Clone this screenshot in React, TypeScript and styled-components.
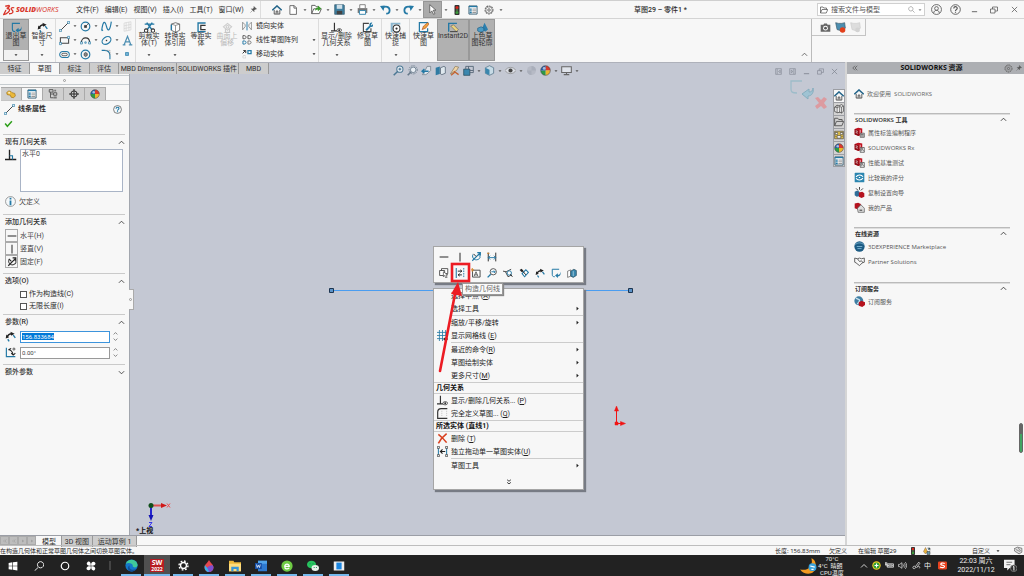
import React, { useEffect, useRef } from 'react';
import styled, { createGlobalStyle, css } from 'styled-components';

const GlobalStyle = createGlobalStyle`
  *, *::before, *::after { box-sizing: border-box; }
  body {
    margin: 0;
    background: #f7f7f7;
    color: #2c2c2c;
    font: 7px/8px Roboto, "Noto Sans CJK SC", sans-serif;
  }
  button, input {
    margin: 0;
    padding: 0;
    border: 0;
    border-radius: 0;
    background: none;
    color: inherit;
    font: inherit;
  }
  button { white-space: nowrap; }
  ul, h1, h2, h3, p { margin: 0; padding: 0; font-size: inherit; list-style: none; }
  a { color: inherit; text-decoration: none; }
`;

/* ---------- icons (16 unit grid) ---------- */

const B = '#2479a5';
const K = '#3a3a3a';
const G = '#777';

const toolCube = (
  <>
    <path d="M1 3l5-2 6 1v8l-5 3-6-2z" fill="#c1121f" />
    <path d="M1 3l6 2v8l-6-2z" fill="#8c0d16" />
    <path d="M2.500 5.500l3 1M2.500 8l3 1M9 4v6" stroke="#fff" strokeWidth="1" />
  </>
);

const glyphs: Record<string, React.ReactNode> = {
  home: (
    <>
      <path d="M3.500 8v6.500h9V8" fill="#fff" stroke={K} strokeWidth="1.300" />
      <path d="M6.500 14.500v-5h3v5" fill="#bbb" stroke={K} />
      <path d="M.5 8.500L8 1.500l7.500 7" fill="none" stroke="#24658a" strokeWidth="2.400" />
    </>
  ),
  page: <path d="M3 1h7l3.500 3.500V15H3zM9.500 1v4h4" fill="#fff" stroke="#555" strokeWidth="1.300" />,
  open: (
    <>
      <path d="M1 14V2h5l1.500 2H11v3M1 14L4 7h11l-3 7z" fill="#fff" stroke="#555" strokeWidth="1.300" />
      <path d="M6 10c0-4 2-5 4-5V2l5 4.500-5 4V8C8 8 7 9 6 10z" fill="#3c9a2c" />
    </>
  ),
  save: (
    <>
      <path d="M1 1h13l1 1v13H1z" fill="#3f7fa0" stroke="#33586b" />
      <path d="M4 1h8v6H4z" fill="#cfdfe8" />
      <path d="M4 10h8v5H4z" fill="#444" />
    </>
  ),
  print: (
    <>
      <path d="M4 6V1h8v5" fill="#fff" stroke="#555" />
      <path d="M1 6h14v7H1z" fill="#777" />
      <path d="M3.500 9.500h9V15h-9z" fill="#fff" stroke="#3685ad" strokeWidth="1.400" />
    </>
  ),
  undo: (
    <>
      <path d="M3 6c5-4 11-2 11 3 0 3-2 5-5 5" fill="none" stroke={B} strokeWidth="2.600" />
      <path d="M0 3l7-1-2 8z" fill={B} />
    </>
  ),
  redo: (
    <>
      <path d="M13 6C8 2 2 4 2 9c0 3 2 5 5 5" fill="none" stroke={B} strokeWidth="2.600" />
      <path d="M16 3L9 2l2 8z" fill={B} />
    </>
  ),
  cursor: <path d="M4 1v12l3-3 2.500 5 2-1-2.500-5H13z" fill="#fff" stroke="#444" />,
  light: (
    <>
      <rect x="4" y="0" width="8" height="16" rx="1.500" fill="#333" />
      <circle cx="8" cy="4" r="2.400" fill="#d9271c" />
      <circle cx="8" cy="8" r="1.300" fill="#6a5" />
      <circle cx="8" cy="12" r="2.400" fill="#3c9a3c" />
    </>
  ),
  list: (
    <>
      <path d="M1.500 1.500h13v13h-13z" fill="#fff" stroke="#3a5f74" strokeWidth="1.500" />
      <path d="M1.500 1.500h13v2h-13z" fill={B} />
      <path d="M7 6.500h6M7 9.300h6M7 12h6" stroke="#777" strokeWidth="1.200" />
      <path d="M2.500 6.500h3.500M2.500 9.300h3.500M2.500 12h3.500" stroke={B} strokeWidth="2" />
    </>
  ),
  gear: (
    <>
      <circle cx="8" cy="8" r="6.300" fill="none" stroke="#666" strokeWidth="1.700" strokeDasharray="3 1.100" />
      <circle cx="8" cy="8" r="5" fill="none" stroke="#777" />
      <circle cx="8" cy="8" r="2" fill="none" stroke="#555" strokeWidth="1.300" />
    </>
  ),
  pin: <path d="M9 1l6 6-3 .5-3 3 .5 2.500L3 6.500l3 .3L9 4zM6 10l-5 5" fill="currentColor" stroke="currentColor" />,
  folder: <path d="M1 14V2h5l1.500 2H13v3M1 14L4 7h11.500l-3 7z" fill="none" stroke="#555" strokeWidth="1.500" />,
  search: <path d="M10 10l5 5M6.500 1.500a5 5 0 1 0 .01 0z" fill="none" stroke="currentColor" strokeWidth="1.400" />,
  user: (
    <g fill="none" stroke="#555" strokeWidth="1.200">
      <circle cx="8" cy="8" r="7.200" />
      <circle cx="8" cy="6.500" r="2.700" />
      <path d="M4 13c0-5 8-5 8 0" />
    </g>
  ),
  help: (
    <g fill="none" stroke="currentColor" strokeWidth="1.300">
      <circle cx="8" cy="8" r="7" />
      <path d="M5.500 6.500c0-3.500 5-3.300 5-.3 0 2-2.500 2-2.500 3.800M8 11.300v1.400" strokeWidth="1.700" />
    </g>
  ),
  helpBlue: (
    <>
      <circle cx="8" cy="8" r="7" fill="#f4f8fa" stroke="#555" strokeWidth="1.300" />
      <path d="M5.500 6.500c0-3.500 5-3.300 5-.3 0 2-2.500 2-2.500 3.800M8 11.300v1.600" fill="none" stroke={B} strokeWidth="2" />
    </>
  ),
  min: <path d="M2 13h12" stroke="currentColor" strokeWidth="2" />,
  restore: <path d="M1 6h9v8H1zM5 6V2h10v8h-5" fill="none" stroke="currentColor" strokeWidth="1.500" />,
  close: <path d="M2 2l12 12M14 2L2 14" stroke="currentColor" strokeWidth="1.700" />,
  exit: (
    <>
      <path d="M13 2H2v8c0 3 1 4 4 4" fill="none" stroke={B} strokeWidth="1.600" />
      <path d="M15 6c0 4-2 5-4 5V8.500L6.500 12l4.500 4v-2.500c4 0 5-4 4-7.500z" fill={B} />
    </>
  ),
  dim: (
    <>
      <path d="M3 9c1-3 4-5 7-5" fill="none" stroke="#222" strokeWidth="2" />
      <path d="M1 11l1-6 4 4zM8 1l6 3-5 3z" fill="#222" />
      <path d="M4 12l2 3M12 6l3 4" stroke={B} strokeWidth="2" />
    </>
  ),
  line: (
    <>
      <path d="M2 14L14 2" stroke="#333" strokeWidth="1.300" />
      <path d="M.5 12.500h3v3h-3zM12.500.5h3v3h-3z" fill="#fff" stroke={B} />
    </>
  ),
  circle: (
    <>
      <circle cx="8" cy="8" r="6.300" fill="none" stroke={B} strokeWidth="1.700" />
      <path d="M6.500 6.500h3v3h-3zM8 8l5-5" fill={K} stroke={K} />
    </>
  ),
  polygon: (
    <>
      <circle cx="8" cy="8" r="6.300" fill="none" stroke={B} strokeWidth="1.700" />
      <path d="M6 6.500l2-1.500 2.500 1.500v3L8 11 6 9.500z" fill="#888" stroke={K} />
    </>
  ),
  spline: <path d="M1 14C3-2 6 0 8 8s5 7 7-7M1 14l2-1" fill="none" stroke={B} strokeWidth="1.700" />,
  rect: (
    <>
      <path d="M2 4h12v8H2z" fill="none" stroke="#444" strokeWidth="1.500" />
      <path d="M.5 11h3v3h-3zM12.500 2h3v3h-3z" fill="#fff" stroke={B} />
    </>
  ),
  arc: (
    <>
      <path d="M2 11C2 2 14 2 14 11" fill="none" stroke="#333" strokeWidth="1.600" />
      <path d="M.5 10h3v3h-3zM12.500 10h3v3h-3zM7 10h2v2H7z" fill="#fff" stroke={B} />
    </>
  ),
  ellipse: (
    <>
      <ellipse cx="8" cy="8" rx="7" ry="5" transform="rotate(-35 8 8)" fill="none" stroke={B} strokeWidth="1.700" />
      <path d="M7 7h2v2H7z" fill={K} />
    </>
  ),
  slot: (
    <>
      <rect x="1" y="3.500" width="14" height="9" rx="4.500" fill="none" stroke={B} strokeWidth="1.500" />
      <rect x="4" y="6.200" width="8" height="3.600" rx="1.800" fill="none" stroke="#555" strokeWidth="1.300" />
    </>
  ),
  fillet: (
    <>
      <path d="M1 2h4c5 0 8 3 8 8v5" fill="none" stroke={B} strokeWidth="1.600" />
      <path d="M6 2h7v7" fill="none" stroke="#888" strokeDasharray="2 1" />
    </>
  ),
  text: <path d="M1 14.500h4M10 14.500h5M3 14.500L8 2l5 12.500M5 10h6" fill="none" stroke="#4e8fb2" strokeWidth="1.800" />,
  point: <path d="M5 5h6v6H5z" fill="#6fb1d4" stroke={B} strokeWidth="1.300" />,
  surfaceGrid: <path d="M3 3l10-2v12L3 15zM3 7l10-2M3 11l10-2M6 2.500v12M10 1.500v12" fill="none" stroke="#d3d3d3" />,
  trim: (
    <>
      <path d="M1 3h14M4 1l8 11M12 1L4 12" stroke={B} strokeWidth="2" />
      <path d="M3 10a2.500 2.500 0 1 0 .1 0zM13 10a2.500 2.500 0 1 0 .1 0z" fill="#fff" stroke="#333" strokeWidth="1.500" />
    </>
  ),
  convert: (
    <>
      <path d="M2 3l6-2 6 2v9l-6 3-6-3z" fill="#fff" stroke="#666" strokeWidth="1.300" />
      <path d="M2 3l6 2 6-2M8 5v10" fill="none" stroke="#666" />
      <path d="M2 4v8" stroke={B} strokeWidth="2" />
    </>
  ),
  offset: (
    <>
      <path d="M14 1.500H3V14h11" fill="none" stroke={B} strokeWidth="2" />
      <path d="M14 5H7v6h7" fill="none" stroke="#333" strokeWidth="1.800" />
    </>
  ),
  surface: (
    <g fill="none" stroke="#ccc" strokeWidth="1.600">
      <path d="M2 7l6-5 6 5-6 5z" />
      <path d="M5 10v5h6v-5" />
      <circle cx="8" cy="7" r="2" />
    </g>
  ),
  mirror: (
    <>
      <path d="M1 2v12l4-5V6zM15 2v12l-4-5V6z" fill="#fff" stroke={G} strokeWidth="1.200" />
      <path d="M8 1v14" stroke={B} strokeWidth="1.500" />
    </>
  ),
  pattern: (
    <g fill="none" strokeWidth="1.500">
      <path d="M1.500 1h2c4 0 4 5 0 5h-2zM9.500 1h2c4 0 4 5 0 5h-2z" stroke="#555" />
      <path d="M1.500 9.500h2c4 0 4 5 0 5h-2z" stroke={B} />
      <path d="M9.500 9.500h2c4 0 4 5 0 5h-2z" stroke={G} />
    </g>
  ),
  move: (
    <>
      <path d="M1 7l4-4M2 2.500h4v4" fill="none" stroke="#333" strokeWidth="1.600" />
      <path d="M9.500 2.500h5v5h-5z" fill="#fff" stroke={B} strokeWidth="2" />
      <path d="M1.500 10.500h4v4h-4z" fill="none" stroke="#aaa" strokeDasharray="1 1" />
    </>
  ),
  relation: (
    <>
      <path d="M5 1v11M0 13h10" stroke="#333" strokeWidth="1.700" />
      <path d="M8 12c2-3 6-3 8 0-2 3-6 3-8 0z" fill="#fff" stroke="#333" strokeWidth="1.200" />
      <circle cx="12" cy="12" r="1.500" fill="#333" />
    </>
  ),
  repair: (
    <>
      <path d="M10 2H2v12h11V9" fill="none" stroke="#444" strokeWidth="1.600" />
      <path d="M5 11l6-6c-1-3 2-5 4-4l-2 3 1 1 2-2c1 3-1 5-3 4l-6 6z" fill={B} />
    </>
  ),
  snap: (
    <>
      <path d="M1 1h14v2.500H4V15H1z" fill="#8cb7cf" />
      <circle cx="9.500" cy="9.500" r="5" fill="#fff" stroke="#333" strokeWidth="1.500" />
      <circle cx="9.500" cy="9.500" r="1.600" fill="#333" />
    </>
  ),
  quick: (
    <>
      <path d="M15 1H2v13h12V9" fill="none" stroke={B} strokeWidth="1.800" />
      <path d="M6 11l2-5 6-5 2 2-5 6z" fill="#f0a33a" stroke="#b2542a" />
    </>
  ),
  instant: (
    <>
      <path d="M1 14V2h12" fill="none" stroke={B} strokeWidth="2" />
      <path d="M4 6l4-2 7 7-3 3z" fill="#ecd37b" stroke="#666" />
      <path d="M3 14h11" stroke="#444" strokeWidth="1.500" />
    </>
  ),
  shaded: (
    <>
      <path d="M7 10l4-9 5 10-4 3z" fill="#2c7fae" />
      <path d="M1 9l5-2 4 2v4l-5 2-4-2z" fill="#4d9cc4" stroke="#1e5f86" />
    </>
  ),
  camera: (
    <>
      <path d="M1 4h4l1-2h4l1 2h4v10H1z" fill="#666" />
      <circle cx="8" cy="9" r="3.500" fill="#fff" />
      <circle cx="8" cy="9" r="2" fill="#555" />
    </>
  ),
  record: (
    <>
      <path d="M1 1l4 1h5l4-1 1 8-3 1-2 3-7-2z" fill="#4b8eb0" stroke="#3a5a6c" />
      <circle cx="11" cy="11.500" r="4" fill="#e2401b" />
    </>
  ),
  recordOff: (
    <>
      <path d="M1 1l4 1h5l4-1 1 8-3 1-2 3-7-2z" fill="#ddd" stroke="#ccc" />
      <circle cx="11" cy="11.500" r="3.500" fill="#d3d3d3" />
    </>
  ),
  zoomFit: (
    <g fill="none" stroke="#4b7894" strokeWidth="1.500">
      <circle cx="10" cy="6" r="4.500" fill="#e8eef4" />
      <path d="M7 9l-6 6" strokeWidth="2.200" />
      <path d="M8 6h4M10 4v4" />
    </g>
  ),
  zoomArea: (
    <g fill="none" stroke="#667889" strokeWidth="1.200">
      <circle cx="9" cy="7" r="6" strokeDasharray="2 1.500" />
      <circle cx="9" cy="7" r="4" fill="#e8eef4" />
      <path d="M6 10l-5 5" strokeWidth="2.200" />
    </g>
  ),
  prev: (
    <>
      <path d="M9 2h5v6l-4 4-3 2H2l4-6z" fill="#dfe5ec" stroke="#68757f" />
      <path d="M2 9h9M5 6L1.500 9 5 12" fill="none" stroke={B} strokeWidth="2" />
    </>
  ),
  section: (
    <>
      <path d="M1 4l6-2v11l-6 2z" fill="#2f7ba3" />
      <path d="M8 4l5-2 2 1v9l-5 2-2-1z" fill="#dfe8ee" stroke="#456" />
    </>
  ),
  wand: (
    <>
      <path d="M2 13L9 2l5 1-3 5z" fill="#f0d5a8" stroke="#875" />
      <path d="M7 9l7 5M3 15l5-4" stroke="#c4622f" strokeWidth="1.800" />
    </>
  ),
  views: (
    <>
      <path d="M1 6h9v9H1z" fill="#3b87ae" stroke="#245" />
      <path d="M4 6V2h11v9h-5M8 2v4M10 8h5" fill="none" stroke="#567" strokeWidth="1.300" />
    </>
  ),
  cube: (
    <>
      <path d="M2 4l6-3 6 3v8l-6 3-6-3z" fill="#c7dbe6" stroke="#4a6c80" />
      <path d="M2 4l6 3v8l-6-3z" fill="#3b87ae" />
    </>
  ),
  eye: (
    <>
      <path d="M0 8c4-6 12-6 16 0-4 6-12 6-16 0z" fill="#dcdfe6" stroke="#888" />
      <circle cx="8" cy="8" r="3" fill="#444" />
    </>
  ),
  ball: (
    <>
      <circle cx="8" cy="8" r="6.500" fill="#b6bac5" />
      <path d="M8 1.500A6.500 6.500 0 0 1 14.500 8H8zM8 8v6.500A6.500 6.500 0 0 1 1.500 8z" fill="#aaafbb" />
    </>
  ),
  colorBall: (
    <>
      <path d="M8 8V1a7 7 0 0 1 7 7z" fill="#d83a2b" />
      <path d="M8 8h7a7 7 0 0 1-7 7z" fill="#ecb72e" />
      <path d="M8 8v7a7 7 0 0 1-7-7z" fill="#2d9a46" />
      <path d="M8 8H1a7 7 0 0 1 7-7z" fill="#2a5ea8" />
      <circle cx="8" cy="8" r="7" fill="none" stroke="#444" strokeWidth=".8" />
      <circle cx="6" cy="5" r="2" fill="#fff" opacity=".6" />
    </>
  ),
  monitor: <path d="M1 2.500h14v8.500H1zM8 11v3M4 14h8" fill="#dfe3ea" stroke="#666" strokeWidth="1.500" />,
  paneLeft: <path d="M1.500 1.500h13v13h-13zM5 2v12M12 5L8 8l4 3z" fill="none" stroke="currentColor" strokeWidth="1.400" />,
  paneRight: <path d="M1.500 1.500h13v13h-13zM11 2v12M5 5l4 3-4 3z" fill="none" stroke="currentColor" strokeWidth="1.400" />,
  part: (
    <>
      <path d="M1 6l3-3 4 1 2 2 4 1 1 4-3 3-4-1-1-3-5-1z" fill="#eab83a" stroke="#9a6d12" />
      <circle cx="5" cy="6" r="1.500" fill="#fff3c4" />
    </>
  ),
  config: (
    <>
      <path d="M2 1h6v4H2zM9 6h5v4H9zM4 5v9h5M4 8h5" fill="none" stroke="#555" strokeWidth="1.500" />
      <path d="M9 12h5v3H9zM10 1h3v3h-3z" fill="#777" />
    </>
  ),
  target: (
    <g fill="none" stroke="#222" strokeWidth="1.500">
      <circle cx="8" cy="8" r="5" />
      <path d="M8 0v16M0 8h16" />
    </g>
  ),
  check: <path d="M2 8l4 5 8-9" fill="none" stroke="#2fa01c" strokeWidth="2.600" />,
  perp: (
    <>
      <path d="M6 1v13M0 14h15" stroke="#222" strokeWidth="1.800" />
      <path d="M6 9h4v5" fill="none" stroke={B} strokeWidth="1.500" />
    </>
  ),
  info: (
    <>
      <circle cx="8" cy="8" r="7.200" fill="#f4f8fa" stroke="#777" />
      <path d="M8 2.500v2.500M8 6.500v7" stroke={B} strokeWidth="2.600" />
    </>
  ),
  horiz: <path d="M1 8h14" stroke="#333" strokeWidth="1.700" />,
  vert: <path d="M8 1v14" stroke="#333" strokeWidth="1.700" />,
  fix: (
    <>
      <path d="M2 14L13 3M9 1.500h5v5" fill="none" stroke="#222" strokeWidth="1.900" />
      <path d="M3 4c-2 6 3 10 8 8s4-6 1-7" fill="none" stroke="#444" strokeWidth="1.700" />
      <path d="M3 3l4 4" stroke="#222" strokeWidth="1.800" />
    </>
  ),
  fixBlue: (
    <>
      <path d="M2 14L14 2M10 1h5v5" fill="none" stroke={B} strokeWidth="1.800" />
      <path d="M3 4c-2 6 3 10 8 8s4-6 1-7" fill="none" stroke={B} strokeWidth="1.600" />
      <path d="M4 3l4 4" stroke="#333" strokeWidth="1.600" />
    </>
  ),
  span: (
    <>
      <path d="M2 1v14M14 1v14" stroke="#333" strokeWidth="1.600" />
      <path d="M2 9h12M5 6L2 9l3 3M11 6l3 3-3 3" fill="none" stroke={B} strokeWidth="1.500" />
      <path d="M0 2h4" stroke="#d8862a" strokeWidth="1.500" />
    </>
  ),
  angle: (
    <>
      <path d="M2 1v13h13" fill="none" stroke={B} strokeWidth="1.700" />
      <path d="M5 4c4 0 6 3 7 8M5 4l4-2M12 12l-3-3M12 12l3-3" fill="none" stroke="#222" strokeWidth="1.500" />
      <circle cx="13" cy="3" r="1.500" fill="none" stroke="#222" />
    </>
  ),
  selectBox: (
    <>
      <path d="M1 4h8v8H1zM4 4V1h10v8h-4" fill="#fff" stroke="#444" strokeWidth="1.400" />
      <path d="M7 6v8l2-2 2 4 2-1-2-4h3z" fill="#fff" stroke="#333" />
    </>
  ),
  construct: (
    <>
      <path d="M2 0v16" stroke={B} strokeWidth="1.700" />
      <path d="M14 0v16" stroke={B} strokeWidth="1.500" strokeDasharray="2.500 1.500" />
      <path d="M4.500 5H11M8.500 3L11 5 8.500 7M11 11H5M7.500 9L5 11l2.500 2" fill="none" stroke="#222" strokeWidth="1.500" />
    </>
  ),
  note: (
    <>
      <path d="M2.500 3.500h12v11h-12z" fill="#fff" stroke="#444" strokeWidth="1.500" />
      <path d="M5 13l3-7 3 7M6 11h4" fill="none" stroke="#444" strokeWidth="1.300" />
      <path d="M2 0v6M0 3h5" stroke="#d8862a" strokeWidth="1.600" />
    </>
  ),
  zoomTo: (
    <>
      <circle cx="10" cy="6" r="5" fill="#fff" stroke="#444" strokeWidth="1.400" />
      <path d="M7 6h6M11 4l2 2-2 2" fill="none" stroke={B} strokeWidth="1.500" />
      <path d="M6 10l-5 5" stroke={B} strokeWidth="2.200" />
    </>
  ),
  hideEntity: (
    <>
      <path d="M0 5l5 1 8-4M4 6l4 8 6-3" fill="none" stroke="#444" strokeWidth="1.500" />
      <circle cx="10" cy="8" r="3.500" fill="#fff" stroke={B} strokeWidth="1.500" />
      <path d="M12 10l3 4" stroke="#222" strokeWidth="1.500" />
    </>
  ),
  tagDim: (
    <>
      <path d="M1 3l3-2 3 3-2 3z" fill="#222" />
      <path d="M5 9l4 5 6-7-4-4z" fill="#fff" stroke={B} strokeWidth="1.700" />
      <path d="M6 5l5 6" stroke="#222" strokeWidth="1.500" />
    </>
  ),
  solid: (
    <>
      <path d="M1 5l5-2v10l-5 2z" fill="#fff" stroke="#444" />
      <path d="M6 5l5-3 4 2v8l-5 3-4-2z" fill="#3a87ad" stroke="#245" />
      <path d="M10 5v8" stroke="#cfe3ee" />
    </>
  ),
  grid: (
    <>
      <path d="M0 3.500h15M0 8h15M0 12.500h9M3.500 0v16M8 0v16M12.500 0v9" stroke={B} strokeWidth="1.200" />
      <path d="M9 13c2-3 5-3 7 0-2 3-5 3-7 0z" fill="#333" />
    </>
  ),
  define: (
    <>
      <path d="M15 1H6C3 1 1 3 1 6v9h14" fill="none" stroke="#333" strokeWidth="1.700" />
      <path d="M7 4v8M14 4v8" stroke="#aaa" strokeDasharray="1.500 1.500" />
    </>
  ),
  remove: <path d="M2 2c4 3 8 7 12 12M14 1C9 5 5 9 2 15" fill="none" stroke="#d9401f" strokeWidth="2.300" />,
  drag: (
    <>
      <path d="M2 1v14M14 1v14" stroke={B} strokeWidth="1.500" />
      <path d="M.5.5h3v3h-3zM.5 12.500h3v3h-3zM12.500.5h3v3h-3zM12.500 12.500h3v3h-3z" fill="#fff" stroke="#333" />
      <path d="M5 8h7M8 5L5 8l3 3" fill="none" stroke="#222" strokeWidth="1.700" />
    </>
  ),
  library: (
    <>
      <path d="M1 5l4-3 3 1 4-2 3 2v9l-3 2-3-1-3 1-5-2z" fill="#eee" stroke="#444" strokeWidth="1.200" />
      <path d="M5 2v12M9 4v10M12 5v10M1 5l4 1 4-2 3 1 3-2" fill="none" stroke="#444" />
    </>
  ),
  palette: (
    <>
      <path d="M1 2h14v12H1z" fill="#e8c64d" stroke="#444" />
      <path d="M2 4h4v3H2zM10 4h4v3h-4zM5 9h6v4H5zM2 10h2M12 10h2" fill="#fff" stroke="#333" />
    </>
  ),
  toolTag: (
    <>
      {toolCube}
      <path d="M9 9h6v6H9zM10 11h4M10 13h4" fill="#ddd" stroke="#444" />
    </>
  ),
  toolRx: (
    <>
      {toolCube}
      <path d="M9 8h6v7H9zM10.500 13.500v-4h2v2l2 2" fill="#eee" stroke="#444" />
    </>
  ),
  compare: (
    <>
      <rect x="1" y="1" width="14" height="14" rx="1" fill="#2c86b0" />
      <path d="M3 7c3-4 8-3 10 0M13 9c-3 4-8 3-10 0M7 8h2" fill="none" stroke="#fff" strokeWidth="1.600" />
    </>
  ),
  wizard: (
    <>
      <path d="M1 7l4-2 3 2v6l-4 1-3-2z" fill="#2e6e99" />
      <path d="M7 8l5-1 3 2v5l-4 2-4-2z" fill="#b5121e" />
      <path d="M3 2l3 3M8 0v4M13 2l-3 3" stroke="#333" strokeWidth="1.300" />
    </>
  ),
  products: (
    <>
      <path d="M1 2l5-1 4 2v7l-4 1-5-2z" fill="#b5121e" />
      <path d="M5 9l5-5 5 5v6H6z" fill="#ddd" stroke="#555" />
      <path d="M8 11h4v2H8z" fill="#666" />
    </>
  ),
  globe: (
    <>
      <circle cx="8" cy="8" r="7.500" fill="#1d5c84" />
      <path d="M2 5c4-3 8-3 12 0M4 8h8M5 11h6" fill="none" stroke="#7db6d4" strokeWidth="1.300" />
    </>
  ),
  shake: <path d="M1 3l4 1 3-1 3 1 4-1v6l-3 1-4 4-5-4-2-1zM5 4l3 4 3-1 2 3" fill="none" stroke="#555" strokeWidth="1.300" />,
  service: (
    <>
      <circle cx="7" cy="7" r="6.500" fill="#3f7ea3" />
      <path d="M3 3c2 2 4 1 5 3s-2 3-3 6" fill="none" stroke="#cfe3ee" strokeWidth="2" />
      <path d="M7 9l4-2 5 2v4l-4 3-5-2z" fill="#b5121e" />
    </>
  ),
  windows: <path d="M1 3l6-1v5.500H1zM8 2l7-1v6.500H8zM1 8.500h6V14l-6-1zM8 8.500h7V15l-7-1z" fill="#fff" />,
  finder: <path d="M7 10l-6 5.500M10.500 1a5 5 0 1 0 .01 0z" fill="none" stroke="#fff" strokeWidth="1.400" />,
  ring: <circle cx="8" cy="8" r="6" fill="none" stroke="#fff" strokeWidth="1.900" />,
  fan: (
    <path
      d="M7.500 7.500C2 9-1 4 3 1c4-1 5 3 4.500 6.500zM8.500 7.500C7 2 12-1 15 3c1 4-3 5-6.500 4.500zM8.500 8.500C14 7 17 12 13 15c-4 1-5-3-4.500-6.500zM7.500 8.500C9 14 4 17 1 13c-1-4 3-5 6.500-4.500z"
      fill="#fff"
    />
  ),
  edge: (
    <>
      <circle cx="8" cy="8" r="7.500" fill="#1477c9" />
      <path d="M1 6C3-1 14-1 15.500 7c0 4-5 4-6 2 1-4-6-5-8.500-3z" fill="#40c99a" />
      <path d="M6 8c-2 4 3 7 8 4-1 2-4 3.500-6 3.500C3 15 2 9 6 8z" fill="#0f4f9a" />
    </>
  ),
  settings: (
    <g fill="none" stroke="#fff">
      <circle cx="8" cy="8" r="4.300" strokeWidth="2" />
      <circle cx="8" cy="8" r="6.500" strokeWidth="2" strokeDasharray="2.500 2.600" />
    </g>
  ),
  drop: (
    <>
      <path d="M8 0c2 4 6 6 6 10a6 6 0 0 1-12 0C2 6 6 4 8 0z" fill="#e5484f" />
      <path d="M8 16a6 6 0 0 0 6-6c0-1-.3-2-1-3-4 0-8 2-9.500 6C4.500 15 6 16 8 16z" fill="#7b4fd0" />
      <path d="M2.500 7C1 12 4 16 8 16c-1-3-2-6-5.500-9z" fill="#37b3e8" />
    </>
  ),
  explorer: (
    <>
      <path d="M0 1h6l1 2h9v12H0z" fill="#f0b93a" />
      <path d="M0 5h16v10H0z" fill="#ffdc7c" />
      <path d="M3 15V9h10v6h-3v-3H6v3z" fill="#3a95d6" />
    </>
  ),
  word: (
    <>
      <path d="M4 1h12v14H4z" fill="#2e7ad1" />
      <path d="M4 1h12v4H4z" fill="#52a5ea" />
      <path d="M0 4h9v8H0z" fill="#164fa5" />
      <path d="M2 6l1 4 1.500-3L6 10l1-4" fill="none" stroke="#fff" />
    </>
  ),
  greenE: (
    <>
      <circle cx="8" cy="8" r="7.500" fill="#6fcb44" />
      <path d="M5 8.500h6c0-4-6-4-6 0s4 4 6 2" fill="none" stroke="#fff" strokeWidth="1.700" />
    </>
  ),
  wechat: (
    <>
      <ellipse cx="6" cy="6" rx="6" ry="5" fill="#27c35f" />
      <ellipse cx="11" cy="10.500" rx="5" ry="4" fill="#e8f2ea" />
      <path d="M4 5h.1M8 5h.1M9.500 10h.1M12.500 10h.1" stroke="#184" strokeWidth="1.400" strokeLinecap="round" />
    </>
  ),
  appWindow: (
    <>
      <path d="M1 2h14v12H1z" fill="#eee" />
      <path d="M4.500 3.500h7v9h-7z" fill="#1c86e0" />
    </>
  ),
  moon: (
    <>
      <path d="M11 1c2 7-3 12-10 10 4 6 14 5 14-3 0-3-1-6-4-7z" fill="#f39a1f" />
      <circle cx="12" cy="9" r="3.500" fill="#3ba3dc" />
      <path d="M10 8l4 1M11 11h2" stroke="#fff" />
    </>
  ),
  plus: (
    <>
      <circle cx="8" cy="8" r="7.500" fill="#e8c91f" />
      <circle cx="8" cy="8" r="5.500" fill="#2a9b37" />
      <path d="M8 4.500v7M4.500 8h7" stroke="#fff" strokeWidth="2" />
    </>
  ),
  battery: <path d="M4 5h11v6H4zM6 7h7v2H6zM1 2v5M3 2v5M0 7h4v3" fill="none" stroke="#eee" strokeWidth="1.400" />,
  sound: <path d="M1 6h2l4-3v10l-4-3H1zM9 6c1 1 1 3 0 4M11 4c2 2 2 6 0 8M13 2c3 3 3 9 0 12" fill="none" stroke="#eee" strokeWidth="1.200" />,
  pen: <path d="M2 13c-2-3 2-5 4-3s-2 5-4 3zM6 10l6-8 2 2-6 8M10 11c3-3 5 0 3 2" fill="none" stroke="#ddd" strokeWidth="1.400" />,
  sogou: (
    <>
      <rect x="0" y="1" width="16" height="14" rx="2" fill="#e8431f" />
      <path d="M12 4.500c-3-1.500-8-1-7 1.500 1 2 6 1 6.500 3.500.5 2.500-4.500 3-8 1" fill="none" stroke="#fff" strokeWidth="2" />
    </>
  ),
  notice: (
    <>
      <path d="M0 1h13v10H7l-3 3v-3H0z" fill="#f2f2f2" />
      <path d="M3 4h7M3 7h5" stroke="#555" />
      <circle cx="12" cy="11.500" r="4" fill="#2b2b2b" stroke="#888" />
      <path d="M11 10l1.200-.8v5" fill="none" stroke="#fff" strokeWidth="1.200" />
    </>
  ),
  rebuild: (
    <>
      <path d="M1 9l4-8 4 8-4 5z" fill="#e5b33a" stroke="#865" />
      <path d="M9 2h5v5M14 2l-4 4M8 9h6v6H8z" fill="#69a" stroke="#333" />
    </>
  ),
  tags: (
    <>
      <path d="M0 5l6-3 8 2v7l-5 3-8-5z" fill="#ddd" stroke="#555" strokeWidth="1.200" />
      <path d="M3 6l8 4M7 3l5 6" stroke="#555" />
    </>
  ),
  chevUp: <path d="M2 11l6-6 6 6" fill="none" stroke="currentColor" strokeWidth="1.900" />,
  chevDown: <path d="M2 5l6 6 6-6" fill="none" stroke="currentColor" strokeWidth="1.900" />,
  collapse: <path d="M8 2L2 8l6 6M14 2L8 8l6 6" fill="none" stroke="currentColor" strokeWidth="2" />,
  expand: <path d="M3 2l5 4 5-4M3 9l5 4 5-4" fill="none" stroke="currentColor" strokeWidth="2.400" />,
  caret: <path d="M2 5h12l-6 7z" fill="currentColor" />,
  play: <path d="M5 2v12l7-6z" fill="currentColor" />,
};

const Svg = styled.svg`
  display: block;
  flex: none;
`;

const Icon = ({ name, size = 11 }: { name: string; size?: number }) => (
  <Svg width={size} height={size} viewBox="0 0 16 16" fill="none" aria-hidden="true">
    {glyphs[name]}
  </Svg>
);

/* ---------- shell ---------- */

const Shell = styled.div`
  display: flex;
  flex-direction: column;
  min-height: 100vh;
`;

const IconButton = styled.button<{ $w?: number; $active?: boolean }>`
  display: flex;
  flex: none;
  align-items: center;
  justify-content: center;
  width: ${(p) => p.$w ?? 12}px;
  color: #555;
  ${(p) => p.$active && css`
    align-self: stretch;
    background: #ababab;
    border: 1px solid #969696;
  `}
`;

/* ---------- title bar ---------- */

const TitleBar = styled.header`
  display: flex;
  align-items: center;
  height: 19px;
  border-top: 1px solid #cfcfcf;
  border-bottom: 1px solid #d4d4d4;
`;

const Brand = styled.div`
  display: flex;
  align-items: center;
  gap: 1px;
  width: 76px;
  padding-left: 3px;
  color: #d9362b;
  font: italic 7px/8px "Open Sans", sans-serif;
  b { font-weight: 800; }
`;

const MenuBar = styled.nav`
  display: flex;
  gap: 6px;
  width: 171px;
`;

const QuickTools = styled.div`
  display: flex;
  align-items: center;
  align-self: stretch;
  margin-left: 1px;
  padding-left: 8px;
  border-left: 1px solid #ddd;
`;

const DocTitle = styled.h1`
  flex: 1;
  text-align: center;
  font-weight: 500;
`;

const SearchBox = styled.label`
  display: flex;
  align-items: center;
  gap: 3px;
  width: 108px;
  height: 13px;
  padding: 0 2px;
  border: 1px solid #d0d0d0;
  background: #fff;
  color: #888;
  input { flex: 1; min-width: 0; outline: 0; }
  input::placeholder { color: #555; opacity: 1; }
`;

const WindowButtons = styled.div`
  display: flex;
  padding-left: 1px;
  color: #444;
`;

/* ---------- ribbon ---------- */

const RibbonRow = styled.div`
  display: flex;
  height: 43px;
`;

const Ribbon = styled.div`
  display: flex;
  flex: 1;
  padding-left: 3px;
  border-right: 1px solid #bbb;
`;

const RibbonGroup = styled.div`
  display: flex;
  border-right: 1px solid #dcdcdc;
`;

const BigButton = styled.button<{ $w?: number; $pressed?: boolean; $disabled?: boolean; $half?: boolean }>`
  display: grid;
  grid-template-rows: 11px 20px 8px;
  justify-items: center;
  align-items: start;
  width: ${(p) => p.$w ?? 26}px;
  height: 42px;
  padding-top: 3px;
  color: ${(p) => (p.$disabled ? '#bbb' : '#333')};
  line-height: 7px;
  text-align: center;
  white-space: pre;
  ${(p) => p.$pressed && css`
    background: #b1b1b1;
    box-shadow: inset 0 0 0 1px #999;
  `}
  ${(p) => p.$half && css`background: linear-gradient(#b1b1b1 31px, #f1f1f1 31px);`}
`;

const ToolGrid = styled.div`
  display: grid;
  grid-template-columns: 14px 7px 14px 7px 14px 7px 14px;
  grid-template-rows: repeat(3, 14px);
  align-items: center;
  justify-items: center;
  padding: 0 1px;
`;

const ToolButton = styled.button`
  color: #555;
`;

const ToolList = styled.div`
  display: flex;
  flex-direction: column;
  width: 78px;
  padding-left: 2px;
`;

const ToolRow = styled.button`
  display: grid;
  grid-template-columns: 14px 1fr 6px;
  align-items: center;
  height: 14px;
  text-align: left;
`;

const RibbonEnd = styled.div`
  display: flex;
  flex: 1;
  align-items: flex-end;
  justify-content: flex-end;
  padding: 0 1px 4px;
`;

const SideTools = styled.div`
  width: 212px;
`;

const CaptureBar = styled.div`
  display: flex;
  align-items: center;
  gap: 3px;
  width: 54px;
  height: 17px;
  padding-left: 7px;
  border: solid #c4c4c4;
  border-width: 0 1px 1px 0;
`;

/* ---------- middle ---------- */

const Middle = styled.div`
  display: flex;
  flex: 1;
`;

const Work = styled.main`
  display: flex;
  flex: 1;
  flex-direction: column;
  min-width: 0;
  background: #c4c8d3;
`;

const Band = styled.div`
  display: grid;
  grid-template-columns: 130px minmax(0, 1fr) auto minmax(0, 1fr);
  height: 12px;
  border-top: 1px solid #aeb1ba;
`;

const Tabs = styled.div`
  display: flex;
  grid-column: 1 / 3;
  grid-row: 1;
`;

const Tab = styled.button<{ $w: number; $active?: boolean }>`
  width: ${(p) => p.$w}px;
  height: 11px;
  border-right: 1px solid #999;
  background: ${(p) => (p.$active ? '#f7f7f7' : '#cdcdcd')};
`;

const ViewTools = styled.div`
  display: flex;
  grid-column: 3;
  grid-row: 1;
  align-items: center;
  padding: 2px 4px 0 0;
`;

const DocButtons = styled.div`
  display: flex;
  grid-column: 4;
  grid-row: 1;
  align-items: center;
  justify-content: flex-end;
  padding: 3px 4px 0 0;
  button { color: #808591; }
`;

const WorkRow = styled.div`
  display: flex;
  flex: 1;
`;

/* ---------- property panel ---------- */

const Panel = styled.aside`
  width: 130px;
  padding-top: 1px;
  border-right: 1px solid #a2a6ae;
  background: #f7f7f7;
`;

const PanelGrip = styled.div`
  display: flex;
  align-items: center;
  justify-content: center;
  height: 10px;
  margin-bottom: 2px;
  border: solid #c6ccd0;
  border-width: 1px 0;
  &::before {
    content: "";
    width: 3px;
    height: 3px;
    border: 1px solid #999;
    border-radius: 2px;
  }
`;

const PanelTabs = styled.div`
  display: flex;
  height: 14px;
  margin-left: 1px;
  border-bottom: 1px solid #c4c4c4;
`;

const PanelTab = styled.button<{ $active?: boolean }>`
  display: flex;
  align-items: center;
  justify-content: center;
  width: 21px;
  border: solid #aaa;
  border-width: 1px 1px 0 0;
  background: ${(p) => (p.$active ? '#f7f7f7' : '#cfcfcf')};
`;

const PanelTitle = styled.div`
  display: flex;
  align-items: center;
  gap: 3px;
  height: 16px;
  padding: 0 7px 0 4px;
  h2 { flex: 1; }
`;

const Confirm = styled.div`
  height: 17px;
  padding: 2px 0 0 3px;
`;

const Section = styled.section<{ $h: number }>`
  height: ${(p) => p.$h}px;
  margin: 0 4px 0 3px;
  padding-left: 2px;
  border-top: 1px solid #cacaca;
`;

const SectionHead = styled.button`
  display: flex;
  align-items: center;
  justify-content: space-between;
  width: 100%;
  height: 14px;
  color: #333;
  font-weight: 500;
`;

const Field = styled.div<{ $h?: number; $top?: boolean }>`
  display: flex;
  align-items: ${(p) => (p.$top ? 'flex-start' : 'center')};
  gap: 3px;
  height: ${(p) => p.$h ?? 13}px;
  color: #444;
`;

const RelationList = styled.ul`
  width: 103px;
  height: 43px;
  padding-left: 1px;
  border: 1px solid #a9b4c6;
  background: #fff;
`;

const SquareButton = styled.button`
  display: flex;
  align-items: center;
  justify-content: center;
  width: 13px;
  height: 13px;
  margin-right: -1px;
  border: 1px solid #aaa;
`;

const CheckLabel = styled.label`
  display: flex;
  align-items: center;
  gap: 2px;
  height: 12px;
  padding-left: 15px;
`;

const CheckBox = styled.input`
  appearance: none;
  width: 7px;
  height: 7px;
  border: 1px solid #555;
  background: #fff;
`;

const NumberBox = styled.input<{ $focus?: boolean }>`
  width: 90px;
  height: 12px;
  margin-left: 1px;
  padding-left: 1px;
  border: 1px solid ${(p) => (p.$focus ? '#3d94dc' : '#999')};
  outline: 0;
  background: #fff;
  font-size: 6px;
  caret-color: transparent;
  &::selection { background: #0078d7; color: #fff; }
`;

const Spinner = styled.div`
  display: flex;
  flex-direction: column;
  gap: 1px;
  button { display: block; }
`;

/* ---------- drawing canvas ---------- */

const Canvas = styled.div`
  position: relative;
  flex: 1;
  min-width: 0;
`;

const Drawing = styled.svg`
  position: absolute;
  inset: 0;
  width: 100%;
  height: 100%;
`;

const ViewName = styled.p`
  position: absolute;
  left: 6px;
  bottom: 0;
  color: #111;
  font-weight: 700;
`;

const CornerTools = styled.div`
  position: absolute;
  top: 5px;
  right: 18px;
`;

const Rail = styled.nav`
  position: absolute;
  top: 15px;
  right: 0;
`;

const RailTab = styled.button<{ $active?: boolean }>`
  display: flex;
  align-items: center;
  justify-content: center;
  width: 12px;
  height: 13px;
  border: 1px solid #9c9ea3;
  border-bottom-width: 0;
  background: ${(p) => (p.$active ? '#f7f7f7' : '#d2d2d2')};
  &:last-child { border-bottom-width: 1px; }
`;

const PanelHandle = styled.button`
  position: absolute;
  top: 215px;
  left: -1px;
  width: 5px;
  height: 21px;
  border: 1px solid #aaa;
  border-left: 0;
  background: #f7f7f7;
  &::before {
    content: "";
    display: block;
    width: 3px;
    height: 3px;
    border: 1px solid #999;
    border-radius: 2px;
  }
`;

const popup = css`
  position: absolute;
  left: 303px;
  width: 151px;
  border: 1px solid #a5a5a5;
  background: #f7f7f7;
  box-shadow: 2px 2px 1px #777b84;
`;

const MiniBar = styled.div`
  ${popup}
  top: 172px;
  height: 37px;
  padding: 2px;
`;

const MiniRow = styled.div`
  display: flex;
  height: 16px;
`;

const ContextMenu = styled.ul`
  ${popup}
  top: 214px;
`;

const MenuItem = styled.li<{ $rule?: boolean }>`
  margin-left: 17px;
  ${(p) => p.$rule && css`border-top: 1px solid #ccc;`}
`;

const MenuButton = styled.button`
  display: grid;
  grid-template-columns: 14px 1fr 8px;
  align-items: center;
  width: 149px;
  height: 13px;
  margin-left: -17px;
  padding-left: 3px;
  color: #222;
  text-align: left;
  span { grid-column: 2; }
  svg:first-child { grid-column: 1; }
  svg:last-child:not(:first-child) { grid-column: 3; }
`;

const MenuHead = styled.li`
  height: 12px;
  padding-left: 2px;
  border: solid #ccc;
  border-width: 1px 0;
  color: #111;
  font-weight: 700;
  line-height: 10px;
`;

const MenuMore = styled.li`
  display: flex;
  justify-content: center;
  padding: 7px 0 4px;
`;

const Tooltip = styled.div`
  position: absolute;
  top: 209px;
  left: 332px;
  padding: 1px 2px;
  border: 1px solid #999;
  background: #fafafa;
  color: #666;
  box-shadow: 1px 1px 1px #888;
`;

/* ---------- bottom tabs ---------- */

const SheetBar = styled.div`
  display: flex;
  height: 10px;
  border-top: 1px solid #9b9ea6;
  background: #f7f7f7;
`;

const SheetNav = styled.div`
  display: flex;
  width: 37px;
  color: #999;
  button {
    display: flex;
    align-items: center;
    justify-content: center;
    width: 9px;
    border: 1px solid #aaa;
    background: #bdbdbd;
  }
`;

/* ---------- task pane ---------- */

const TaskPane = styled.aside`
  width: 179px;
  border-left: 2px solid #d5d5d5;
  background: #f7f7f7;
`;

const PaneHead = styled.div`
  display: flex;
  align-items: center;
  height: 12px;
  padding: 0 1px 0 2px;
  background: #adafb3;
  h2 { flex: 1; color: #111; font-family: "Open Sans", "Noto Sans CJK SC", sans-serif; text-align: center; }
`;

const paneFont = css`
  font: 6px/8px "Open Sans", "Noto Sans CJK SC", sans-serif;
`;

const Welcome = styled.a`
  display: flex;
  align-items: center;
  gap: 3px;
  height: 39px;
  padding-left: 7px;
  color: #666;
  ${paneFont}
`;

const PaneSection = styled.section<{ $gap?: number }>`
  margin: 0 14px ${(p) => p.$gap ?? 0}px 7px;
  border-top: 1px solid #bbb;
  box-shadow: inset 0 1px #ddd;
`;

const PaneToggle = styled.button`
  display: flex;
  align-items: center;
  justify-content: space-between;
  width: 100%;
  height: 11px;
  padding: 0 3px 0 1px;
  ${paneFont}
  font-weight: 600;
`;

const PaneLink = styled.a`
  display: flex;
  align-items: center;
  gap: 3px;
  height: 15px;
  color: #555;
  ${paneFont}
`;

/* ---------- status bar and taskbar ---------- */

const StatusBar = styled.footer`
  display: flex;
  align-items: center;
  gap: 6px;
  height: 10px;
  padding-right: 1px;
  border-top: 1px solid #bdbdbd;
  font: 6px/8px "Noto Sans", "Noto Sans CJK SC", sans-serif;
  p { flex: 1; }
`;

const StatusText = styled.span<{ $w: number; $end?: boolean }>`
  width: ${(p) => p.$w}px;
  white-space: nowrap;
  ${(p) => p.$end && css`text-align: right;`}
`;

const StatusIcons = styled.span`
  display: flex;
  align-items: center;
  gap: 14px;
`;

const Taskbar = styled.nav`
  display: flex;
  height: 21px;
  background: #222;
  color: #f0f0f0;
`;

const TaskApp = styled.button<{ $open?: boolean; $active?: boolean }>`
  display: flex;
  align-items: center;
  justify-content: center;
  width: 26px;
  background: ${(p) => (p.$active ? '#505050' : 'none')};
  box-shadow: ${(p) => (p.$open || p.$active ? 'inset 0 -2px #76b9ed' : 'none')};
  ${(p) => p.$open && css`
    width: 20px;
    margin: 0 3px;
  `}
`;

const TaskDivider = styled.span`
  width: 2px;
  height: 9px;
  margin: 6px 7px 6px 5px;
  background: #444;
`;

const SwBadge = styled.span`
  display: flex;
  flex-direction: column;
  align-items: center;
  width: 14px;
  height: 13px;
  background: #b81c22;
  color: #fff;
  font: 700 7px/8px "Noto Sans", sans-serif;
  small { font-size: 5px; line-height: 5px; }
`;

const Tray = styled.div`
  display: flex;
  align-items: center;
  margin-left: auto;
  color: #eee;
`;

const Weather = styled.div`
  display: flex;
  align-items: center;
  width: 59px;
`;

const Readings = styled.div`
  display: flex;
  flex-direction: column;
  align-items: center;
  margin-left: -3px;
  font-size: 6px;
  line-height: 7px;
`;

const Clock = styled.time`
  width: 42px;
  margin-left: 2px;
  line-height: 9px;
  text-align: center;
`;

const FloatingMeter = styled.div`
  position: fixed;
  top: 423px;
  right: 1px;
  width: 4px;
  height: 30px;
  border: 1px solid #666;
  border-radius: 2px;
  background: linear-gradient(#666 10px, #41a562 10px);
`;

/* ---------- data ---------- */

const menus = ['文件(F)', '编辑(E)', '视图(V)', '插入(I)', '工具(T)', '窗口(W)'];

type Big = { icon: string; label: string; w?: number; caret?: boolean; pressed?: boolean; disabled?: boolean; half?: boolean };

const BigTool = ({ icon, label, w, caret, pressed, disabled, half }: Big) => (
  <BigButton $w={w} $pressed={pressed} $disabled={disabled} $half={half}>
    <Icon name={icon} size={11} />
    <span>{label}</span>
    {caret && <Icon name="caret" size={4} />}
  </BigButton>
);

const sketchTools: [string, boolean][] = [
  ['line', true], ['circle', true], ['spline', true], ['surfaceGrid', false],
  ['rect', true], ['arc', true], ['ellipse', true], ['text', false],
  ['slot', true], ['polygon', false], ['fillet', true], ['point', false],
];

const ribbonTabs: [string, number][] = [
  ['特征', 30], ['草图', 30], ['标注', 30], ['评估', 29], ['MBD Dimensions', 58], ['SOLIDWORKS 插件', 62], ['MBD', 30],
];

const viewTools: [string, boolean][] = [
  ['zoomFit', false], ['zoomArea', false], ['prev', false], ['section', false], ['wand', false], ['views', true],
  ['cube', true], ['eye', true], ['ball', false], ['colorBall', true], ['monitor', true],
];

type Entry = { label: string; icon?: string; key?: string; more?: boolean; rule?: boolean; head?: boolean };

const entries: Entry[] = [
  { label: '选择中点 ', key: 'A' },
  { label: '选择工具', more: true },
  { label: '缩放/平移/旋转', more: true, rule: true },
  { label: '显示网格线 ', key: 'E', icon: 'grid' },
  { label: '最近的命令', key: 'R', more: true, rule: true },
  { label: '草图绘制实体', more: true },
  { label: '更多尺寸', key: 'M', more: true },
  { label: '几何关系', head: true },
  { label: '显示/删除几何关系... ', key: 'P', icon: 'relation' },
  { label: '完全定义草图... ', key: 'Q', icon: 'define' },
  { label: '所选实体 (直线1)', head: true },
  { label: '删除 ', key: 'T', icon: 'remove' },
  { label: '独立拖动单一草图实体', key: 'U', icon: 'drag' },
  { label: '草图工具', more: true, rule: true },
];

const paneTools: [string, string][] = [
  ['toolTag', '属性标签编制程序'],
  ['toolRx', 'SOLIDWORKS Rx'],
  ['toolRx', '性能基准测试'],
  ['compare', '比较我的评分'],
  ['wizard', '复制设置向导'],
  ['products', '我的产品'],
];

/* ---------- parts ---------- */

const Top = () => (
  <>
    <TitleBar>
      <Brand>
        <Svg width="12" height="12" viewBox="0 0 16 16" fill="none" stroke="#d9362b" strokeWidth="1.700" aria-hidden="true">
          <path d="M3 3l5-1c2 1-1 3-3 4 4 0 5 2 2 5s-6 3-6 3l3-6M15 5c-4-1-5 1-3 3s2 5-4 5" />
        </Svg>
        <span><b>SOLID</b>WORKS</span>
      </Brand>
      <MenuBar>
        {menus.map((m) => <button key={m}>{m}</button>)}
      </MenuBar>
      <IconButton $w={12} aria-label="固定菜单"><Icon name="pin" size={7} /></IconButton>
      <QuickTools>
        <IconButton $w={16} aria-label="主页"><Icon name="home" size={10} /></IconButton>
        <IconButton $w={16} aria-label="新建"><Icon name="page" size={10} /></IconButton>
        <IconButton $w={7} aria-label="新建选项"><Icon name="caret" size={4} /></IconButton>
        {['open', 'save', 'print', 'undo', 'redo'].map((n) => (
          <React.Fragment key={n}>
            <IconButton $w={17} aria-label={n}><Icon name={n} size={11} /></IconButton>
            <IconButton $w={6} aria-label={`${n} 选项`}><Icon name="caret" size={4} /></IconButton>
          </React.Fragment>
        ))}
        <IconButton $w={19} $active aria-label="选择"><Icon name="cursor" size={11} /></IconButton>
        <IconButton $w={7} aria-label="选择选项"><Icon name="caret" size={4} /></IconButton>
        <IconButton $w={16} aria-label="重建"><Icon name="light" size={10} /></IconButton>
        <IconButton $w={16} aria-label="文件属性"><Icon name="list" size={10} /></IconButton>
        <IconButton $w={16} aria-label="选项"><Icon name="gear" size={10} /></IconButton>
        <IconButton $w={7} aria-label="更多选项"><Icon name="caret" size={4} /></IconButton>
      </QuickTools>
      <DocTitle>草图29 – 零件1 *</DocTitle>
      <SearchBox>
        <Icon name="folder" size={8} />
        <input type="text" placeholder="搜索文件与模型" aria-label="搜索文件与模型" />
        <Icon name="search" size={7} />
        <Icon name="caret" size={4} />
      </SearchBox>
      <WindowButtons>
        <IconButton $w={20} aria-label="用户"><Icon name="user" size={11} /></IconButton>
        <IconButton $w={19} aria-label="帮助"><Icon name="help" size={11} /></IconButton>
        <IconButton $w={19} aria-label="最小化"><Icon name="min" size={7} /></IconButton>
        <IconButton $w={20} aria-label="还原"><Icon name="restore" size={8} /></IconButton>
        <IconButton $w={20} aria-label="关闭"><Icon name="close" size={7} /></IconButton>
      </WindowButtons>
    </TitleBar>
    <RibbonRow>
      <Ribbon>
        <RibbonGroup>
          <BigTool icon="exit" label={'退出草\n图'} caret pressed half />
          <BigTool icon="dim" label={'智能尺\n寸'} caret />
        </RibbonGroup>
        <RibbonGroup>
          <ToolGrid>
            {sketchTools.map(([name, caret], i) => (
              <React.Fragment key={i}>
                <ToolButton aria-label={name}><Icon name={name} size={name === 'point' ? 8 : 11} /></ToolButton>
                {caret && <ToolButton aria-label={`${name} 选项`}><Icon name="caret" size={4} /></ToolButton>}
                {!caret && i % 4 !== 3 && <span />}
              </React.Fragment>
            ))}
          </ToolGrid>
        </RibbonGroup>
        <RibbonGroup>
          <BigTool icon="trim" label={'剪裁实\n体(T)'} caret />
          <BigTool icon="convert" label={'转换实\n体引用'} caret />
          <BigTool icon="offset" label={'等距实\n体'} />
          <BigTool icon="surface" label={'曲面上\n偏移'} disabled />
          <ToolList>
            <ToolRow><Icon name="mirror" size={10} /><span>镜向实体</span></ToolRow>
            <ToolRow><Icon name="pattern" size={10} /><span>线性草图阵列</span><Icon name="caret" size={4} /></ToolRow>
            <ToolRow><Icon name="move" size={10} /><span>移动实体</span><Icon name="caret" size={4} /></ToolRow>
          </ToolList>
        </RibbonGroup>
        <RibbonGroup>
          <BigTool icon="relation" label={'显示/删除\n几何关系'} w={35} caret />
          <BigTool icon="repair" label={'修复草\n图'} w={27} />
        </RibbonGroup>
        <RibbonGroup>
          <BigTool icon="snap" label={'快速捕\n捉'} w={27} caret />
        </RibbonGroup>
        <BigTool icon="quick" label={'快速草\n图'} w={27} />
        <BigTool icon="instant" label="Instant2D" w={32} pressed />
        <BigTool icon="shaded" label={'上色草\n图轮廓'} w={26} pressed />
        <RibbonEnd>
          <IconButton aria-label="折叠功能区"><Icon name="chevUp" size={7} /></IconButton>
        </RibbonEnd>
      </Ribbon>
      <SideTools>
        <CaptureBar>
          <IconButton aria-label="截图"><Icon name="camera" /></IconButton>
          <IconButton aria-label="录制"><Icon name="record" /></IconButton>
          <IconButton aria-label="停止录制"><Icon name="recordOff" /></IconButton>
        </CaptureBar>
      </SideTools>
    </RibbonRow>
  </>
);

const Head = ({ children, open = true }: { children: React.ReactNode; open?: boolean }) => (
  <SectionHead>
    <span>{children}</span>
    <Icon name={open ? 'chevUp' : 'chevDown'} size={7} />
  </SectionHead>
);

const Spin = () => (
  <Spinner>
    <button aria-label="增加"><Icon name="chevUp" size={5} /></button>
    <button aria-label="减少"><Icon name="chevDown" size={5} /></button>
  </Spinner>
);

const PropertyPanel = () => {
  const length = useRef<HTMLInputElement>(null);
  useEffect(() => {
    length.current?.focus();
    length.current?.select();
  }, []);
  return (
    <Panel>
      <PanelGrip />
      <PanelTabs>
        {['part', 'list', 'config', 'target', 'colorBall'].map((n) => (
          <PanelTab key={n} $active={n === 'list'} aria-label={n}><Icon name={n} size={10} /></PanelTab>
        ))}
      </PanelTabs>
      <PanelTitle>
        <Icon name="line" size={11} />
        <h2>线条属性</h2>
        <IconButton $w={9} aria-label="帮助"><Icon name="helpBlue" size={9} /></IconButton>
      </PanelTitle>
      <Confirm>
        <IconButton $w={10} aria-label="确定"><Icon name="check" size={9} /></IconButton>
      </Confirm>
      <Section $h={80}>
        <Head>现有几何关系</Head>
        <Field $h={46} $top>
          <Icon name="perp" size={12} />
          <RelationList><li>水平0</li></RelationList>
        </Field>
        <Field>
          <Icon name="info" size={11} />
          <span>欠定义</span>
        </Field>
      </Section>
      <Section $h={59}>
        <Head>添加几何关系</Head>
        <Field><SquareButton aria-label="水平"><Icon name="horiz" size={10} /></SquareButton>水平(H)</Field>
        <Field><SquareButton aria-label="竖直"><Icon name="vert" size={10} /></SquareButton>竖直(V)</Field>
        <Field><SquareButton aria-label="固定"><Icon name="fix" size={10} /></SquareButton>固定(F)</Field>
      </Section>
      <Section $h={41}>
        <Head>选项(O)</Head>
        <CheckLabel><CheckBox type="checkbox" />作为构造线(C)</CheckLabel>
        <CheckLabel><CheckBox type="checkbox" />无限长度(I)</CheckLabel>
      </Section>
      <Section $h={50}>
        <Head>参数(R)</Head>
        <Field $h={15}>
          <Icon name="dim" size={11} />
          <NumberBox ref={length} $focus type="text" defaultValue="156.833684" aria-label="长度" />
          <Spin />
        </Field>
        <Field $h={17}>
          <Icon name="angle" size={11} />
          <NumberBox type="text" defaultValue="0.00°" aria-label="角度" />
          <Spin />
        </Field>
      </Section>
      <Section $h={15}>
        <Head open={false}>额外参数</Head>
      </Section>
    </Panel>
  );
};

const Viewport = () => (
  <Canvas>
    <Drawing aria-hidden="true">
      <path d="M202 216.500h298" stroke="#4a9df0" strokeWidth="1.200" />
      <path d="M199.500 214.500h4v4h-4zM498.500 214.500h4v4h-4z" fill="#5b93c8" stroke="#1d3550" />
      <g stroke="#f01414" fill="#f01414">
        <path d="M486.500 349.500V334M486.500 349.500H493" />
        <path d="M484.500 337l2-5 2 5zM490.500 347.500l5 2-5 2zM485 348h3v3h-3z" strokeWidth=".5" />
      </g>
      <path d="M21 431.500h10" stroke="#e05050" strokeWidth="2" />
      <path d="M31 429l6 2.500-6 2.500z" fill="#d01818" />
      <path d="M21 431v11" stroke="#2424d0" strokeWidth="2" />
      <path d="M18.500 441h5l-2.500 6z" fill="#1414b4" />
      <circle cx="21" cy="431.500" r="2.500" fill="#0f4f1a" />
      <path d="M37 429.500l3 4M40 429.500l-3 4" stroke="#f04a4a" />
      <path d="M19 448.500h3l-3 4h3" fill="none" stroke="#3434ee" />
    </Drawing>
    <ViewName>*上视</ViewName>
    <PanelHandle aria-label="折叠面板" />
    <CornerTools>
      <Svg width="40" height="38" viewBox="0 0 40 38" fill="none" aria-hidden="true">
        <path d="M15 2H4v8c0 3 1 4 6 4" stroke="#9dbcc9" strokeWidth="1.300" />
        <path d="M26 9c0 3-2 4-4 4v-3l-7 5 6 5v-3c4 0 6-4 5-8z" fill="#9fc3d3" stroke="#86aebf" />
        <path d="M28 19l3-1 3 3 3-3 3 2-3 4 3 4-3 2-3-3-4 3-2-3 4-3z" fill="#dc9ba0" />
      </Svg>
    </CornerTools>
    <Rail aria-label="任务窗格">
      {['home', 'library', 'folder', 'palette', 'colorBall', 'list'].map((n, i) => (
        <RailTab key={n} $active={i === 0} aria-label={n}><Icon name={n} size={10} /></RailTab>
      ))}
    </Rail>
    <MiniBar>
      <MiniRow>
        {['horiz', 'vert', 'fixBlue', 'span'].map((n) => (
          <IconButton key={n} $w={16} aria-label={n}><Icon name={n} size={10} /></IconButton>
        ))}
      </MiniRow>
      <MiniRow>
        {['selectBox', 'construct', 'note', 'zoomTo', 'hideEntity', 'tagDim', 'dim', 'exit', 'solid'].map((n) => (
          <IconButton key={n} $w={16} aria-label={n}><Icon name={n} size={10} /></IconButton>
        ))}
      </MiniRow>
    </MiniBar>
    <ContextMenu>
      {entries.map((e) =>
        e.head ? (
          <MenuHead key={e.label}>{e.label}</MenuHead>
        ) : (
          <MenuItem key={e.label} $rule={e.rule}>
            <MenuButton>
              {e.icon ? <Icon name={e.icon} size={11} /> : <svg width="1" height="1" aria-hidden="true" />}
              <span>
                {e.label}
                {e.key && <>(<u>{e.key}</u>)</>}
              </span>
              {e.more && <Icon name="play" size={5} />}
            </MenuButton>
          </MenuItem>
        ),
      )}
      <MenuMore><Icon name="expand" size={6} /></MenuMore>
    </ContextMenu>
    <Tooltip role="tooltip">构造几何线</Tooltip>
    <Drawing pointerEvents="none" aria-hidden="true">
      <rect x="322" y="190" width="17" height="17" fill="none" stroke="#ec1c24" strokeWidth="2.600" />
      <path d="M310 297l15-77" stroke="#ec1c24" strokeWidth="2.600" strokeLinecap="round" />
      <path d="M328 208l4 14-11-2z" fill="#ec1c24" />
    </Drawing>
  </Canvas>
);

const Resources = () => (
  <TaskPane>
    <PaneHead>
      <IconButton aria-label="折叠"><Icon name="collapse" size={6} /></IconButton>
      <h2>SOLIDWORKS 资源</h2>
      <IconButton aria-label="设置"><Icon name="gear" size={9} /></IconButton>
      <IconButton $w={9} aria-label="固定"><Icon name="pin" size={6} /></IconButton>
    </PaneHead>
    <Welcome href="#welcome"><Icon name="home" size={10} />欢迎使用&nbsp; SOLIDWORKS</Welcome>
    <PaneSection $gap={12}>
      <PaneToggle>SOLIDWORKS 工具<Icon name="chevUp" size={7} /></PaneToggle>
      {paneTools.map(([icon, label]) => (
        <PaneLink key={label} href="#tools"><Icon name={icon} size={11} />{label}</PaneLink>
      ))}
    </PaneSection>
    <PaneSection $gap={13}>
      <PaneToggle>在线资源<Icon name="chevUp" size={7} /></PaneToggle>
      <PaneLink href="#market"><Icon name="globe" size={11} />3DEXPERIENCE Marketplace</PaneLink>
      <PaneLink href="#partners"><Icon name="shake" size={11} />Partner Solutions</PaneLink>
    </PaneSection>
    <PaneSection>
      <PaneToggle>订阅服务<Icon name="chevUp" size={7} /></PaneToggle>
      <PaneLink href="#subscription"><Icon name="service" size={11} />订阅服务</PaneLink>
    </PaneSection>
  </TaskPane>
);

const Desktop = () => (
  <Taskbar aria-label="任务栏">
    {['windows', 'finder', 'ring', 'fan'].map((n) => (
      <TaskApp key={n} aria-label={n}><Icon name={n} size={10} /></TaskApp>
    ))}
    <TaskDivider />
    <TaskApp $open aria-label="edge"><Icon name="edge" size={13} /></TaskApp>
    <TaskApp $active aria-label="SOLIDWORKS"><SwBadge>SW<small>2022</small></SwBadge></TaskApp>
    {['settings', 'drop', 'explorer', 'word', 'greenE', 'wechat', 'appWindow'].map((n) => (
      <TaskApp key={n} $open aria-label={n}><Icon name={n} size={n === 'settings' ? 11 : 12} /></TaskApp>
    ))}
    <Tray>
      <Weather>
        <Icon name="moon" size={18} />
        <Readings>
          <span>&emsp;70°C</span>
          <span>&nbsp;&nbsp;4°C&nbsp; 晴朗</span>
          <span>&emsp;CPU温度</span>
        </Readings>
      </Weather>
      <IconButton aria-label="显示隐藏的图标" $w={12}><Svg width="8" height="8" viewBox="0 0 16 16"><path d="M2 11l6-6 6 6" fill="none" stroke="#eee" strokeWidth="1.700" /></Svg></IconButton>
      <IconButton $w={13} aria-label="安全"><Icon name="plus" size={9} /></IconButton>
      <IconButton $w={13} aria-label="电池"><Icon name="battery" size={9} /></IconButton>
      <IconButton $w={13} aria-label="音量"><Icon name="sound" size={9} /></IconButton>
      <IconButton $w={15} aria-label="手写笔"><Icon name="pen" size={9} /></IconButton>
      <button>中</button>
      <IconButton $w={22} aria-label="输入法"><Icon name="sogou" size={9} /></IconButton>
      <Clock>22:03 周六<br />2022/11/12</Clock>
      <IconButton $w={27} aria-label="通知"><Icon name="notice" size={13} /></IconButton>
    </Tray>
  </Taskbar>
);

export default function App() {
  return (
    <Shell>
      <GlobalStyle />
      <Top />
      <Middle>
        <Work>
          <Band>
            <Tabs>
              {ribbonTabs.map(([label, w]) => (
                <Tab key={label} $w={w} $active={label === '草图'}>{label}</Tab>
              ))}
            </Tabs>
            <ViewTools>
              {viewTools.map(([name, caret]) => (
                <React.Fragment key={name}>
                  <IconButton $w={14} aria-label={name}><Icon name={name} size={11} /></IconButton>
                  {caret && <IconButton $w={7} aria-label={`${name} 选项`}><Icon name="caret" size={4} /></IconButton>}
                </React.Fragment>
              ))}
            </ViewTools>
            <DocButtons>
              {['paneLeft', 'paneRight', 'min', 'restore', 'close'].map((n) => (
                <IconButton key={n} $w={14} aria-label={n}><Icon name={n} size={7} /></IconButton>
              ))}
            </DocButtons>
          </Band>
          <WorkRow>
            <PropertyPanel />
            <Viewport />
          </WorkRow>
          <SheetBar>
            <SheetNav>
              {['第一页', '上一页', '下一页', '最后一页'].map((n, i) => (
                <button key={n} aria-label={n}><Icon name={i < 2 ? 'collapse' : 'play'} size={4} /></button>
              ))}
            </SheetNav>
            <Tab $w={25} $active>模型</Tab>
            <Tab $w={31}>3D 视图</Tab>
            <Tab $w={44}>运动算例 1</Tab>
          </SheetBar>
        </Work>
        <Resources />
      </Middle>
      <StatusBar>
        <p>在构造几何体和正常草图几何体之间切换草图实体。</p>
        <StatusText $w={48}>长度: 156.83mm</StatusText>
        <StatusText $w={23}>欠定义</StatusText>
        <StatusText $w={45}>在编辑 草图29</StatusText>
        <Icon name="light" size={8} />
        <Icon name="rebuild" size={8} />
        <StatusText $w={53} $end>自定义</StatusText>
        <StatusIcons>
          <Icon name="caret" size={4} />
          <Icon name="tags" size={9} />
        </StatusIcons>
      </StatusBar>
      <Desktop />
      <FloatingMeter />
    </Shell>
  );
}
